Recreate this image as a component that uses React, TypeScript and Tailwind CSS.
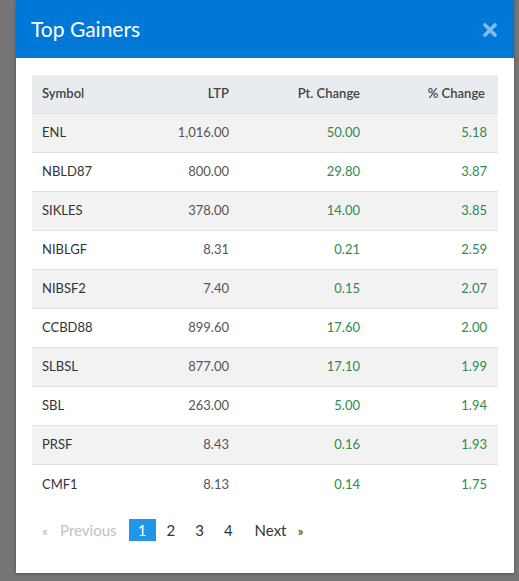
import React from 'react';

type Row = {
  symbol: string;
  ltp: string;
  pt: string;
  pct: string;
};

const rows: Row[] = [
  { symbol: 'ENL', ltp: '1,016.00', pt: '50.00', pct: '5.18' },
  { symbol: 'NBLD87', ltp: '800.00', pt: '29.80', pct: '3.87' },
  { symbol: 'SIKLES', ltp: '378.00', pt: '14.00', pct: '3.85' },
  { symbol: 'NIBLGF', ltp: '8.31', pt: '0.21', pct: '2.59' },
  { symbol: 'NIBSF2', ltp: '7.40', pt: '0.15', pct: '2.07' },
  { symbol: 'CCBD88', ltp: '899.60', pt: '17.60', pct: '2.00' },
  { symbol: 'SLBSL', ltp: '877.00', pt: '17.10', pct: '1.99' },
  { symbol: 'SBL', ltp: '263.00', pt: '5.00', pct: '1.94' },
  { symbol: 'PRSF', ltp: '8.43', pt: '0.16', pct: '1.93' },
  { symbol: 'CMF1', ltp: '8.13', pt: '0.14', pct: '1.75' },
];

const cols = 'grid grid-cols-[100px_109px_131px_126px]';

const App = () => {
  return (
    <div
      className="h-[581px] w-[519px] overflow-hidden bg-[#757575]"
      style={{ fontFamily: 'Lato, "Noto Sans", sans-serif' }}
    >
      <div className="ml-4 w-[498px] bg-white shadow-[0_1px_3px_rgba(0,0,0,0.3)]">
        <div className="flex h-[58px] items-center justify-between bg-[#0078d7] pl-[15px] pr-[17px]">
          <h4 className="text-[21px] text-white">Top Gainers</h4>
          <svg width="14" height="14" viewBox="0 0 14 14" className="mt-[2px]">
            <path d="M2 2 L12 12 M12 2 L2 12" stroke="#80bcef" strokeWidth="3.6" strokeLinecap="round" />
          </svg>
        </div>

        <div className="px-4 pt-[17px] pb-[32px]">
          <div className="text-[13px]">
            <div className={`${cols} h-[39px] items-center border-b border-[#dee2e6] bg-[#e9ecef] font-semibold text-[#444]`}>
              <div className="pl-[10px]">Symbol</div>
              <div className="pr-[12px] text-right">LTP</div>
              <div className="pr-[12px] text-right">Pt. Change</div>
              <div className="pr-[13px] text-right">% Change</div>
            </div>
            {rows.map((r, i) => (
              <div
                key={r.symbol}
                className={`${cols} h-[39px] items-center border-b border-[#dee2e6] last:border-b-0 ${
                  i % 2 === 0 ? 'bg-[#f2f2f2]' : 'bg-white'
                }`}
              >
                <div className="pl-[10px] text-[#333]">{r.symbol}</div>
                <div className="pr-[12px] text-right text-[#555]">{r.ltp}</div>
                <div className="pr-[12px] text-right text-[#2f8a4f]">{r.pt}</div>
                <div className="pr-[11px] text-right text-[#2f8a4f]">{r.pct}</div>
              </div>
            ))}
          </div>

          <div className="mt-[15px] flex h-[22px] items-center pl-[10px] text-[15px] text-[#333]">
            <span className="text-[14px] text-[#bbb]">«</span>
            <span className="ml-[12px] text-[#c2c2c2]">Previous</span>
            <span className="ml-[12px] flex h-[22px] w-[27px] items-center justify-center bg-[#2196e8] text-white">
              1
            </span>
            <span className="ml-[11px]">2</span>
            <span className="ml-[20px]">3</span>
            <span className="ml-[20px]">4</span>
            <span className="ml-[22px]">Next</span>
            <span className="ml-[11px] text-[14px]">»</span>
          </div>
        </div>
      </div>
    </div>
  );
};

export default App;
